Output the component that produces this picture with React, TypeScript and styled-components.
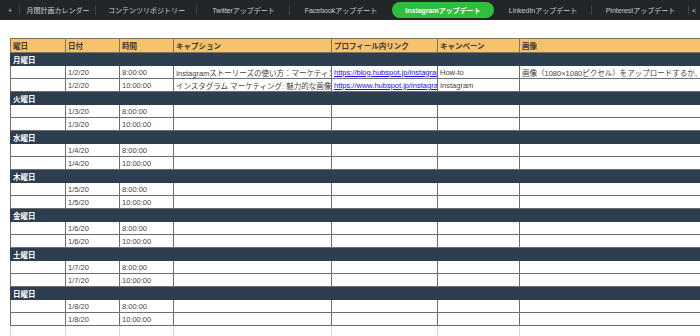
import styled, { createGlobalStyle } from "styled-components";

const GlobalStyle = createGlobalStyle`
  html, body {
    margin: 0;
    padding: 0;
    background: #ffffff;
    overflow: hidden;
  }
  body {
    font-family: "Liberation Sans", "Noto Sans CJK JP", sans-serif;
  }
`;

const Page = styled.div`
  width: 700px;
  height: 336px;
  overflow: hidden;
  background: #fff;
`;

const TabBar = styled.div`
  display: flex;
  align-items: center;
  height: 20px;
  background: #222629;
  color: #c9cccf;
  font-size: 7px;
  white-space: nowrap;
`;

const Tab = styled.div<{ $w: number; $sep?: boolean }>`
  flex: 0 0 ${(p) => p.$w}px;
  height: 100%;
  display: flex;
  align-items: center;
  justify-content: center;
  position: relative;

  &::after {
    content: "";
    display: ${(p) => (p.$sep ? "block" : "none")};
    position: absolute;
    right: 0;
    top: 5px;
    height: 10px;
    width: 1px;
    background: #3d4246;
  }
`;

const Pill = styled.div`
  width: 102px;
  height: 16px;
  border-radius: 8px;
  background: #30bf3d;
  color: #ffffff;
  font-weight: bold;
  display: flex;
  align-items: center;
  justify-content: center;
`;

const Sheet = styled.div`
  padding: 18px 0 0 10px;
`;

const Table = styled.table`
  border-collapse: collapse;
  table-layout: fixed;
  width: 760px;
  font-size: 7.5px;
  color: #333;
`;

const Col = styled.col<{ $w: number }>`
  width: ${(p) => p.$w}px;
`;

const Head = styled.th`
  height: 13px;
  padding: 0 2px;
  background: #f6c26c;
  border: 1px solid #7d7464;
  text-align: left;
  font-weight: bold;
  color: #3a3a3a;
`;

const DayCell = styled.td`
  height: 12px;
  padding: 0 2px;
  background: #2c3e50;
  color: #ffffff;
  font-weight: bold;
  border: 1px solid #2c3e50;
`;

const Cell = styled.td<{ $faint?: boolean }>`
  height: 12px;
  padding: 0 2px;
  border: 1px solid ${(p) => (p.$faint ? "#d6d6d6" : "#6e6e6e")};
  white-space: nowrap;
  overflow: hidden;
  text-overflow: clip;
  color: #444;
`;

const Link = styled.a`
  color: #1a0dff;
  text-decoration: underline;
`;

const tabs = [
  { label: "月間計画カレンダー", w: 76 },
  { label: "コンテンツリポジトリー", w: 101 },
  { label: "Twitterアップデート", w: 93 },
  { label: "Facebookアップデート", w: 102 },
  { label: "Instagramアップデート", w: 100, active: true },
  { label: "LinkedInアップデート", w: 98 },
  { label: "Pinterestアップデート", w: 97 },
];

const days = [
  { day: "月曜日", date: "1/2/20" },
  { day: "火曜日", date: "1/3/20" },
  { day: "水曜日", date: "1/4/20" },
  { day: "木曜日", date: "1/5/20" },
  { day: "金曜日", date: "1/6/20" },
  { day: "土曜日", date: "1/7/20" },
  { day: "日曜日", date: "1/8/20" },
];

const headers = ["曜日", "日付", "時間", "キャプション", "プロフィール内リンク", "キャンペーン", "画像"];

const App: React.FC = () => {
  return (
    <Page>
      <GlobalStyle />
      <TabBar>
        <Tab $w={20} $sep>+</Tab>
        {tabs.map((t, i) => (
          <Tab key={t.label} $w={t.w} $sep={!t.active && i !== 3}>
            {t.active ? <Pill>{t.label}</Pill> : t.label}
          </Tab>
        ))}
        <Tab $w={10}>&lt;</Tab>
      </TabBar>
      <Sheet>
        <Table>
          <colgroup>
            <Col $w={55} />
            <Col $w={54} />
            <Col $w={54} />
            <Col $w={158} />
            <Col $w={106} />
            <Col $w={82} />
            <Col $w={251} />
          </colgroup>
          <thead>
            <tr>
              {headers.map((h) => (
                <Head key={h}>{h}</Head>
              ))}
            </tr>
          </thead>
          <tbody>
            {days.map((d, i) => (
              <>
                <tr key={d.day}>
                  <DayCell colSpan={7}>{d.day}</DayCell>
                </tr>
                <tr key={d.day + "1"}>
                  <Cell />
                  <Cell>{d.date}</Cell>
                  <Cell>8:00:00</Cell>
                  <Cell>{i === 0 ? "Instagramストーリーズの使い方：マーケティン" : ""}</Cell>
                  <Cell>
                    {i === 0 ? <Link>https://blog.hubspot.jp/instagram</Link> : ""}
                  </Cell>
                  <Cell>{i === 0 ? "How-to" : ""}</Cell>
                  <Cell>{i === 0 ? "画像（1080×1080ピクセル）をアップロードするか、" : ""}</Cell>
                </tr>
                <tr key={d.day + "2"}>
                  <Cell />
                  <Cell>{d.date}</Cell>
                  <Cell>10:00:00</Cell>
                  <Cell>{i === 0 ? "インスタグラム マーケティング: 魅力的な画像" : ""}</Cell>
                  <Cell>
                    {i === 0 ? <Link>https://www.hubspot.jp/instagram</Link> : ""}
                  </Cell>
                  <Cell>{i === 0 ? "Instagram" : ""}</Cell>
                  <Cell />
                </tr>
              </>
            ))}
            <tr>
              {headers.map((h) => (
                <Cell key={h} $faint />
              ))}
            </tr>
          </tbody>
        </Table>
      </Sheet>
    </Page>
  );
};

export default App;
